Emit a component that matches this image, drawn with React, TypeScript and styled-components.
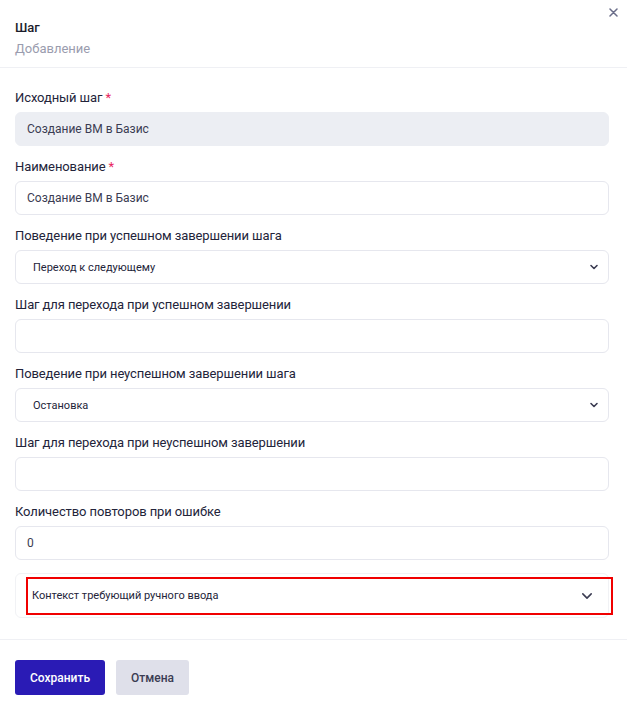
import React from "react";
import styled, { createGlobalStyle } from "styled-components";

const GlobalStyle = createGlobalStyle`
  html, body {
    margin: 0;
    padding: 0;
    background: #ffffff;
  }
  body {
    font-family: Roboto, "Noto Sans", "Liberation Sans", sans-serif;
    color: #1f2033;
  }
  * {
    box-sizing: border-box;
  }
`;

const Modal = styled.div`
  width: 627px;
  min-height: 709px;
  background: #fff;
  position: relative;
  display: flex;
  flex-direction: column;
`;

const Header = styled.header`
  padding: 20px 15px 10px;
  border-bottom: 1px solid #eff0f4;
  display: flex;
  flex-direction: column;
  gap: 5px;
`;

const Title = styled.div`
  font-size: 13px;
  font-weight: 500;
  line-height: 16px;
  color: #1b1c2a;
`;

const Subtitle = styled.div`
  font-size: 13px;
  line-height: 16px;
  color: #9a9cae;
`;

const CloseButton = styled.button`
  position: absolute;
  top: 5px;
  right: 7px;
  width: 14px;
  height: 14px;
  border: none;
  background: none;
  padding: 0;
  display: flex;
  align-items: center;
  justify-content: center;
  cursor: pointer;
`;

const Body = styled.div`
  padding: 22px 18px 21px 15px;
  display: flex;
  flex-direction: column;
  gap: 13px;
  border-bottom: 1px solid #eff0f4;
`;

const Field = styled.div`
  display: flex;
  flex-direction: column;
  gap: 6px;
`;

const Label = styled.label`
  font-size: 13px;
  line-height: 16px;
  color: #23243a;
  letter-spacing: -0.1px;
`;

const Required = styled.span`
  color: #e8265e;
  margin-left: 3px;
`;

const Input = styled.div<{ $disabled?: boolean }>`
  height: 34px;
  border-radius: 6px;
  border: 1px solid ${(p) => (p.$disabled ? "#eceef3" : "#e6e7ee")};
  background: ${(p) => (p.$disabled ? "#eceef3" : "#ffffff")};
  padding: 0 11px;
  display: flex;
  align-items: center;
  font-size: 12px;
  color: #3b3c52;
`;

const Select = styled.div`
  height: 34px;
  border-radius: 6px;
  border: 1px solid #e6e7ee;
  background: #fff;
  padding: 0 9px 0 17px;
  display: flex;
  align-items: center;
  justify-content: space-between;
  font-size: 11px;
  color: #23243a;
`;

const Accordion = styled.div`
  border: 1px solid #f1f2f5;
  border-radius: 6px;
  height: 45px;
  display: flex;
  align-items: center;
`;

const AccordionHeader = styled.div`
  margin-left: 10px;
  margin-right: -5px;
  flex: 1;
  height: 38px;
  border: 2px solid #f00000;
  display: flex;
  align-items: center;
  justify-content: space-between;
  padding: 0 17px 0 4px;
  font-size: 11px;
  color: #23243a;
`;

const Footer = styled.footer`
  padding: 20px 15px;
  display: flex;
  gap: 11px;
`;

const Button = styled.button<{ $primary?: boolean }>`
  height: 35px;
  padding: 0 15px;
  border: none;
  border-radius: 3px;
  font-family: inherit;
  font-size: 12px;
  font-weight: 500;
  background: ${(p) => (p.$primary ? "#2a1bb5" : "#dfe0ea")};
  color: ${(p) => (p.$primary ? "#ffffff" : "#3b3c52")};
  cursor: pointer;
`;

const Chevron = ({ size = 10, weight = 1.6 }: { size?: number; weight?: number }) => (
  <svg width={size} height={size} viewBox="0 0 10 10" fill="none">
    <path d="M2 3.5 L5 6.5 L8 3.5" stroke="#3b3c52" strokeWidth={weight} strokeLinecap="round" strokeLinejoin="round" />
  </svg>
);

const App = () => {
  return (
    <>
      <GlobalStyle />
      <Modal>
        <CloseButton aria-label="close">
          <svg width="9" height="9" viewBox="0 0 9 9">
            <path d="M1 1 L8 8 M8 1 L1 8" stroke="#6b6e8a" strokeWidth="1.5" strokeLinecap="round" />
          </svg>
        </CloseButton>
        <Header>
          <Title>Шаг</Title>
          <Subtitle>Добавление</Subtitle>
        </Header>
        <Body>
          <Field>
            <Label>
              Исходный шаг<Required>*</Required>
            </Label>
            <Input $disabled>Создание ВМ в Базис</Input>
          </Field>
          <Field>
            <Label>
              Наименование<Required>*</Required>
            </Label>
            <Input>Создание ВМ в Базис</Input>
          </Field>
          <Field>
            <Label>Поведение при успешном завершении шага</Label>
            <Select>
              Переход к следующему
              <Chevron />
            </Select>
          </Field>
          <Field>
            <Label>Шаг для перехода при успешном завершении</Label>
            <Input />
          </Field>
          <Field>
            <Label>Поведение при неуспешном завершении шага</Label>
            <Select>
              Остановка
              <Chevron />
            </Select>
          </Field>
          <Field>
            <Label>Шаг для перехода при неуспешном завершении</Label>
            <Input />
          </Field>
          <Field>
            <Label>Количество повторов при ошибке</Label>
            <Input>0</Input>
          </Field>
          <Accordion>
            <AccordionHeader>
              Контекст требующий ручного ввода
              <Chevron size={14} weight={1.1} />
            </AccordionHeader>
          </Accordion>
        </Body>
        <Footer>
          <Button $primary>Сохранить</Button>
          <Button>Отмена</Button>
        </Footer>
      </Modal>
    </>
  );
};

export default App;
